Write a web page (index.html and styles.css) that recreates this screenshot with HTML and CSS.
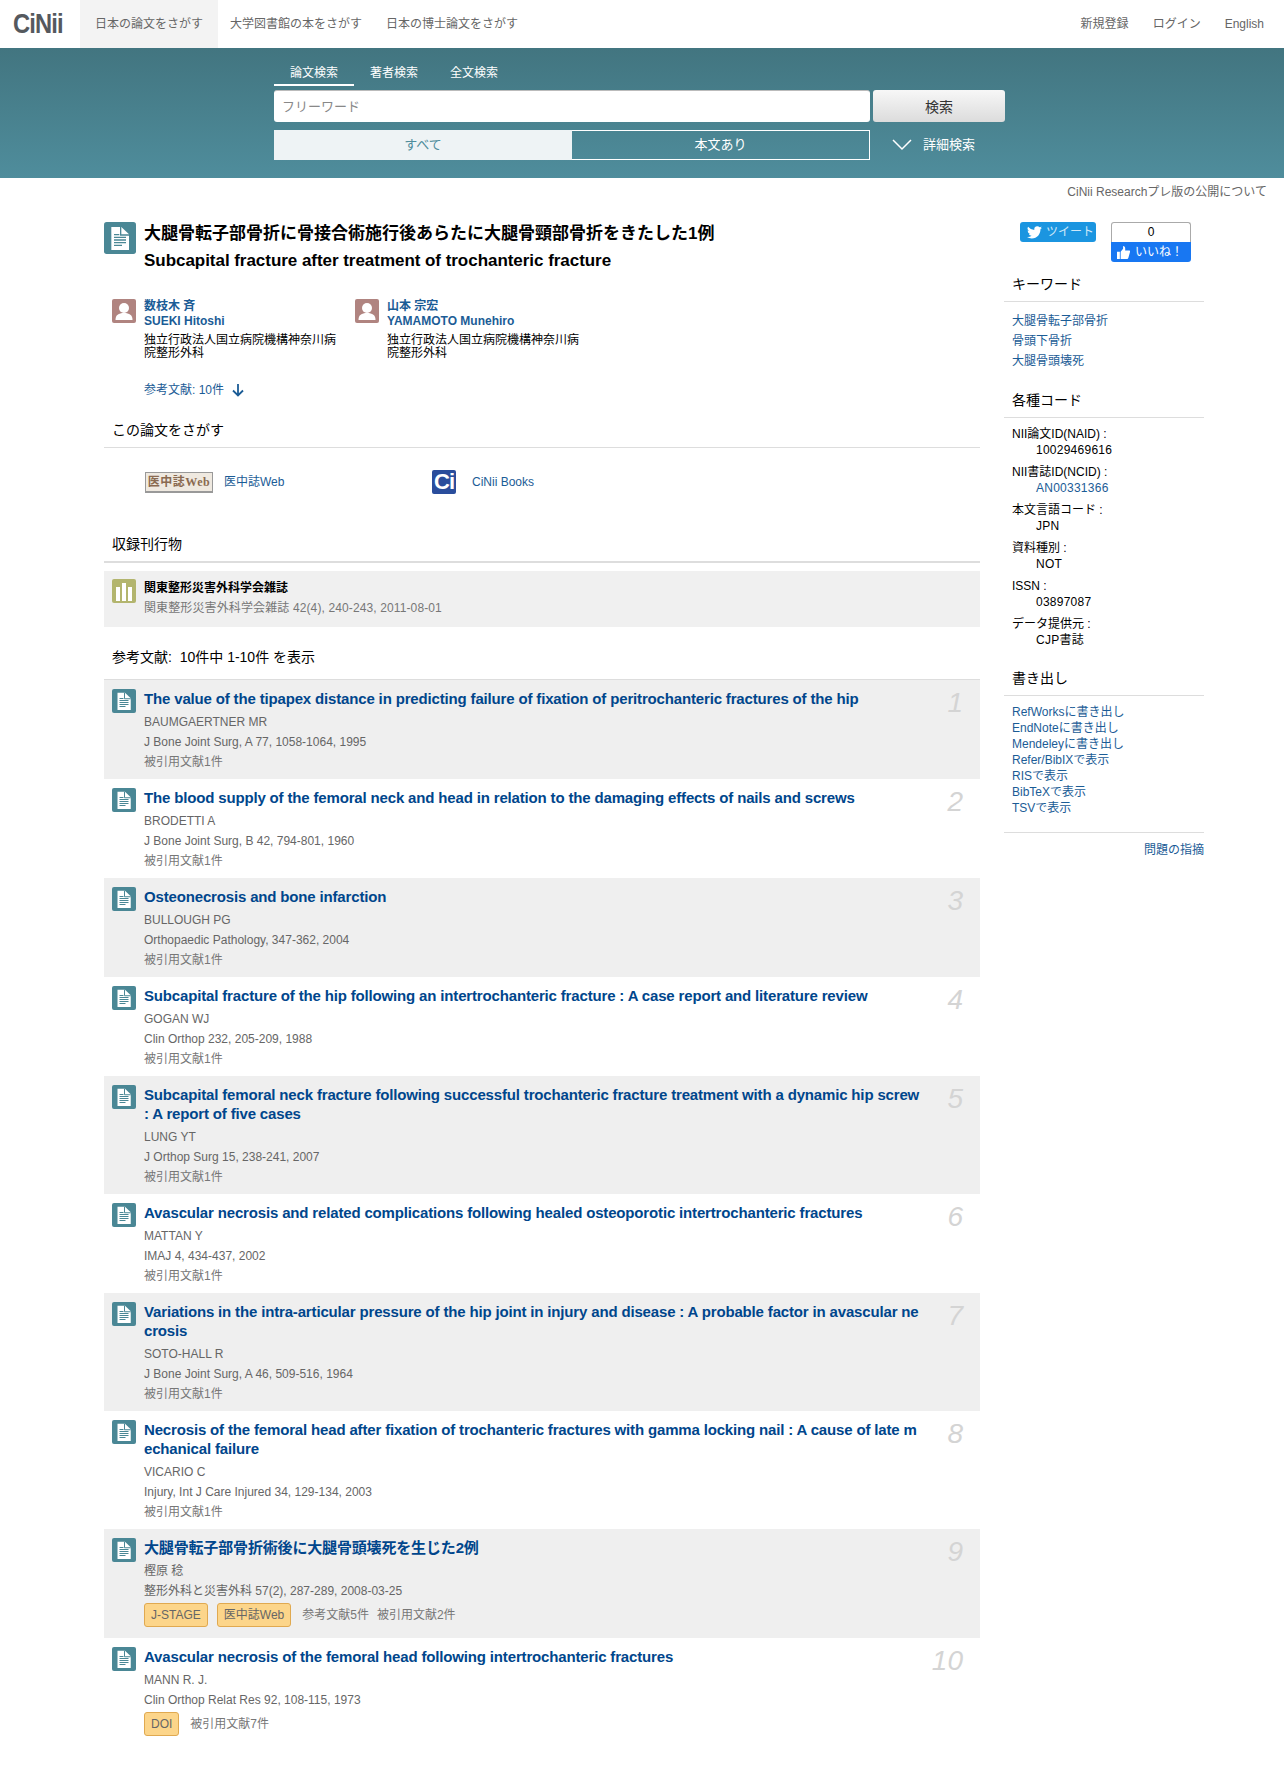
FILE: index.html
```html
<!DOCTYPE html>
<html lang="ja">
<head>
    <meta charset="UTF-8">
    <title>CiNii 論文</title>
    <link rel="stylesheet" href="styles.css">
</head>
<body>
    <svg class="defs" width="0" height="0">
        <symbol id="doc" viewBox="0 0 24 24">
            <rect width="24" height="24" rx="2" fill="#4a8795"/>
            <path d="M5.500 3.750h7.500l5.750 5.500V21H5.500z" fill="#fff"/>
            <path d="M12.500 3.750v6h6.250" fill="none" stroke="#4a8795" stroke-width="1"/>
            <path d="M7.500 9.500h4M7.500 11.500h9M7.500 13.500h9M7.500 15.500h9M7.500 17.500h6" stroke="#4a8795" stroke-width="1" fill="none"/>
        </symbol>
    </svg>

    <header class="topbar">
        <a class="logo"><span class="logo-text">CiNii</span></a>
        <nav class="topnav">
            <a class="active">日本の論文をさがす</a>
            <a>大学図書館の本をさがす</a>
            <a>日本の博士論文をさがす</a>
        </nav>
        <div class="usernav">
            <a>新規登録</a>
            <a>ログイン</a>
            <a>English</a>
        </div>
    </header>

    <section class="search">
        <div class="search-inner">
            <div class="search-tabs">
                <a class="active">論文検索</a>
                <a>著者検索</a>
                <a>全文検索</a>
            </div>
            <div class="search-row">
                <input class="search-input" type="text" placeholder="フリーワード">
                <button class="search-btn">検索</button>
            </div>
            <div class="search-row">
                <div class="range">
                    <span class="range-on">すべて</span>
                    <span class="range-off">本文あり</span>
                </div>
                <a class="detail">
                    <svg width="20" height="12" viewBox="0 0 20 12"><path d="M1 1l9 9 9-9" fill="none" stroke="#fff" stroke-width="1.500"/></svg>
                    詳細検索
                </a>
            </div>
        </div>
    </section>

    <div class="notice"><a>CiNii Researchプレ版の公開について</a></div>

    <div class="wrap">
        <main class="content">
            <div class="paper-head">
                <svg class="icon-lg"><use href="#doc"/></svg>
                <div>
                    <h1>大腿骨転子部骨折に骨接合術施行後あらたに大腿骨頸部骨折をきたした1例</h1>
                    <h2>Subcapital fracture after treatment of trochanteric fracture</h2>
                </div>
            </div>

            <div class="authors">
                <div class="author">
                    <svg class="icon" viewBox="0 0 24 24"><rect width="24" height="24" rx="2" fill="#b08480"/><circle cx="12" cy="9" r="5" fill="#fff"/><path d="M3.500 21c0-5 3-7 8.500-7s8.500 2 8.500 7z" fill="#fff"/></svg>
                    <div class="author-info">
                        <a class="author-name">数枝木 斉<br>SUEKI Hitoshi</a>
                        <p>独立行政法人国立病院機構神奈川病院整形外科</p>
                    </div>
                </div>
                <div class="author">
                    <svg class="icon" viewBox="0 0 24 24"><rect width="24" height="24" rx="2" fill="#b08480"/><circle cx="12" cy="9" r="5" fill="#fff"/><path d="M3.500 21c0-5 3-7 8.500-7s8.500 2 8.500 7z" fill="#fff"/></svg>
                    <div class="author-info">
                        <a class="author-name">山本 宗宏<br>YAMAMOTO Munehiro</a>
                        <p>独立行政法人国立病院機構神奈川病院整形外科</p>
                    </div>
                </div>
            </div>

            <a class="ref-jump">参考文献: 10件
                <svg width="14" height="14" viewBox="0 0 14 14"><path d="M7 1v11M2 7.500l5 5 5-5" fill="none" stroke="#1b5c96" stroke-width="1.800"/></svg>
            </a>

            <h3 class="section-title">この論文をさがす</h3>
            <div class="find">
                <div class="find-item first">
                    <span class="ichushi">医中誌Web</span>
                    <a>医中誌Web</a>
                </div>
                <div class="find-item">
                    <span class="ci-books">Ci</span>
                    <a>CiNii Books</a>
                </div>
            </div>

            <h3 class="section-title thick">収録刊行物</h3>
            <div class="journal">
                <svg class="icon" viewBox="0 0 24 24"><rect width="24" height="24" rx="2" fill="#b3b56e"/><path d="M4 8h4v14H4zM10 4h4v18h-4zM16 8h4v14h-4z" fill="#fff"/></svg>
                <div class="journal-text">
                    <div class="journal-name">関東整形災害外科学会雑誌</div>
                    <div class="journal-sub">関東整形災害外科学会雑誌 42(4), 240-243, 2011-08-01</div>
                </div>
            </div>

            <h3 class="section-title refs-title">参考文献:&nbsp; 10件中 1-10件 を表示</h3>
            <ol class="refs">
                <li class="ref odd">
                    <svg class="icon"><use href="#doc"/></svg>
                    <div class="ref-body">
                        <a class="ref-title">The value of the tipapex distance in predicting failure of fixation of peritrochanteric fractures of the hip</a>
                        <div>BAUMGAERTNER MR</div>
                        <div>J Bone Joint Surg, A 77, 1058-1064, 1995</div>
                        <div class="cited">被引用文献1件</div>
                    </div>
                    <span class="ref-num">1</span>
                </li>
                <li class="ref">
                    <svg class="icon"><use href="#doc"/></svg>
                    <div class="ref-body">
                        <a class="ref-title">The blood supply of the femoral neck and head in relation to the damaging effects of nails and screws</a>
                        <div>BRODETTI A</div>
                        <div>J Bone Joint Surg, B 42, 794-801, 1960</div>
                        <div class="cited">被引用文献1件</div>
                    </div>
                    <span class="ref-num">2</span>
                </li>
                <li class="ref odd">
                    <svg class="icon"><use href="#doc"/></svg>
                    <div class="ref-body">
                        <a class="ref-title">Osteonecrosis and bone infarction</a>
                        <div>BULLOUGH PG</div>
                        <div>Orthopaedic Pathology, 347-362, 2004</div>
                        <div class="cited">被引用文献1件</div>
                    </div>
                    <span class="ref-num">3</span>
                </li>
                <li class="ref">
                    <svg class="icon"><use href="#doc"/></svg>
                    <div class="ref-body">
                        <a class="ref-title">Subcapital fracture of the hip following an intertrochanteric fracture : A case report and literature review</a>
                        <div>GOGAN WJ</div>
                        <div>Clin Orthop 232, 205-209, 1988</div>
                        <div class="cited">被引用文献1件</div>
                    </div>
                    <span class="ref-num">4</span>
                </li>
                <li class="ref odd">
                    <svg class="icon"><use href="#doc"/></svg>
                    <div class="ref-body">
                        <a class="ref-title">Subcapital femoral neck fracture following successful trochanteric fracture treatment with a dynamic hip screw : A report of five cases</a>
                        <div>LUNG YT</div>
                        <div>J Orthop Surg 15, 238-241, 2007</div>
                        <div class="cited">被引用文献1件</div>
                    </div>
                    <span class="ref-num">5</span>
                </li>
                <li class="ref">
                    <svg class="icon"><use href="#doc"/></svg>
                    <div class="ref-body">
                        <a class="ref-title">Avascular necrosis and related complications following healed osteoporotic intertrochanteric fractures</a>
                        <div>MATTAN Y</div>
                        <div>IMAJ 4, 434-437, 2002</div>
                        <div class="cited">被引用文献1件</div>
                    </div>
                    <span class="ref-num">6</span>
                </li>
                <li class="ref odd">
                    <svg class="icon"><use href="#doc"/></svg>
                    <div class="ref-body">
                        <a class="ref-title">Variations in the intra-articular pressure of the hip joint in injury and disease : A probable factor in avascular ne crosis</a>
                        <div>SOTO-HALL R</div>
                        <div>J Bone Joint Surg, A 46, 509-516, 1964</div>
                        <div class="cited">被引用文献1件</div>
                    </div>
                    <span class="ref-num">7</span>
                </li>
                <li class="ref">
                    <svg class="icon"><use href="#doc"/></svg>
                    <div class="ref-body">
                        <a class="ref-title">Necrosis of the femoral head after fixation of trochanteric fractures with gamma locking nail : A cause of late m echanical failure</a>
                        <div>VICARIO C</div>
                        <div>Injury, Int J Care Injured 34, 129-134, 2003</div>
                        <div class="cited">被引用文献1件</div>
                    </div>
                    <span class="ref-num">8</span>
                </li>
                <li class="ref odd">
                    <svg class="icon"><use href="#doc"/></svg>
                    <div class="ref-body">
                        <a class="ref-title">大腿骨転子部骨折術後に大腿骨頭壊死を生じた2例</a>
                        <div>樫原 稔</div>
                        <div>整形外科と災害外科 57(2), 287-289, 2008-03-25</div>
                        <div class="ref-links">
                            <a class="tag">J-STAGE</a><a class="tag">医中誌Web</a>
                            <span class="cited">参考文献5件</span><span class="cited">被引用文献2件</span>
                        </div>
                    </div>
                    <span class="ref-num">9</span>
                </li>
                <li class="ref">
                    <svg class="icon"><use href="#doc"/></svg>
                    <div class="ref-body">
                        <a class="ref-title">Avascular necrosis of the femoral head following intertrochanteric fractures</a>
                        <div>MANN R. J.</div>
                        <div>Clin Orthop Relat Res 92, 108-115, 1973</div>
                        <div class="ref-links">
                            <a class="tag">DOI</a>
                            <span class="cited">被引用文献7件</span>
                        </div>
                    </div>
                    <span class="ref-num">10</span>
                </li>
            </ol>
        </main>

        <aside class="side">
            <div class="social">
                <a class="tweet">
                    <svg width="15" height="13" viewBox="0 0 24 20"><path d="M24 2.400a9.800 9.800 0 0 1-2.800.8A5 5 0 0 0 23.300.4a9.800 9.800 0 0 1-3.100 1.200 4.900 4.900 0 0 0-8.400 4.500A14 14 0 0 1 1.700.9a4.900 4.900 0 0 0 1.500 6.600 4.900 4.900 0 0 1-2.200-.6v.1a4.900 4.900 0 0 0 3.900 4.800 4.900 4.900 0 0 1-2.200.1 4.900 4.900 0 0 0 4.600 3.400A9.900 9.900 0 0 1 0 17.300 14 14 0 0 0 7.500 19.500c9.100 0 14-7.500 14-14v-.6A10 10 0 0 0 24 2.400z" fill="#fff"/></svg>
                    ツイート
                </a>
                <div class="like">
                    <div class="like-count">0</div>
                    <a class="like-btn">
                        <svg width="13" height="13" viewBox="0 0 16 16"><path d="M0 7h3.500v9H0zM4.500 7l3-3.500V0c2 0 3 1.500 2.500 5.500h5c1 0 1.500 1 1 2l-2 7c-.3 1-1 1.500-2 1.500H4.500z" fill="#fff"/></svg>
                        いいね！
                    </a>
                </div>
            </div>

            <h3 class="side-title">キーワード</h3>
            <ul class="keywords">
                <li><a>大腿骨転子部骨折</a></li>
                <li><a>骨頭下骨折</a></li>
                <li><a>大腿骨頭壊死</a></li>
            </ul>

            <h3 class="side-title">各種コード</h3>
            <dl class="codes">
                <dt>NII論文ID(NAID) :</dt>
                <dd>10029469616</dd>
                <dt>NII書誌ID(NCID) :</dt>
                <dd><a>AN00331366</a></dd>
                <dt>本文言語コード :</dt>
                <dd>JPN</dd>
                <dt>資料種別 :</dt>
                <dd>NOT</dd>
                <dt>ISSN :</dt>
                <dd>03897087</dd>
                <dt>データ提供元 :</dt>
                <dd>CJP書誌</dd>
            </dl>

            <h3 class="side-title">書き出し</h3>
            <ul class="exports">
                <li><a>RefWorksに書き出し</a></li>
                <li><a>EndNoteに書き出し</a></li>
                <li><a>Mendeleyに書き出し</a></li>
                <li><a>Refer/BibIXで表示</a></li>
                <li><a>RISで表示</a></li>
                <li><a>BibTeXで表示</a></li>
                <li><a>TSVで表示</a></li>
            </ul>
            <div class="report"><a>問題の指摘</a></div>
        </aside>
    </div>
</body>
</html>
```

FILE: styles.css
```css
* {
    margin: 0;
    padding: 0;
    box-sizing: border-box;
}

body {
    font-family: "Liberation Sans", "Noto Sans CJK JP", sans-serif;
    font-size: 12px;
    line-height: 16px;
    color: #000;
    background: #fff;
}

a {
    color: #1b5c96;
    text-decoration: none;
}

ul, ol {
    list-style: none;
}

.defs {
    display: block;
    height: 0;
}

.icon, .icon-lg {
    flex: none;
    width: 24px;
    height: 24px;
}

.icon-lg {
    width: 32px;
    height: 32px;
}

/* top bar */
.topbar {
    display: flex;
    align-items: stretch;
    height: 48px;
    background: #fff;
}

.logo {
    width: 80px;
    padding-left: 13px;
    line-height: 48px;
}

.logo-text {
    display: inline-block;
    font-size: 27px;
    font-weight: bold;
    letter-spacing: -1px;
    color: #55595e;
    transform: scaleX(.88);
    transform-origin: left;
}

.topnav {
    display: flex;
}

.topnav a, .usernav a {
    line-height: 48px;
    color: #666;
}

.topnav a {
    padding: 0 12px;
    background: #fff;
}

.topnav a.active {
    width: 138px;
    padding: 0 15px;
    background: #f3f3f3;
}

.usernav {
    display: flex;
    gap: 24px;
    margin-left: auto;
    padding-right: 20px;
}

/* search band */
.search {
    height: 130px;
    background: linear-gradient(#427580, #4f8d9c);
}

.search-inner {
    width: 731px;
    margin-left: 274px;
}

.search-tabs {
    display: flex;
    height: 38px;
    padding-top: 17px;
}

.search-tabs a {
    width: 80px;
    height: 21px;
    text-align: center;
    color: #fff;
}

.search-tabs a.active {
    border-bottom: 2px solid #fff;
}

.search-row {
    display: flex;
    gap: 3px;
    margin-top: 4px;
}

.search-row + .search-row {
    margin-top: 8px;
}

.search-input {
    width: 596px;
    height: 32px;
    padding: 0 8px;
    border: 0;
    border-top: 1px solid #bbb;
    border-radius: 3px;
    font: 13px "Liberation Sans", "Noto Sans CJK JP", sans-serif;
}

.search-input::placeholder {
    color: #888;
}

.search-btn {
    width: 132px;
    height: 32px;
    border: 0;
    border-radius: 3px;
    background: linear-gradient(#f7f7f7, #dcdcdc);
    font: 14px "Liberation Sans", "Noto Sans CJK JP", sans-serif;
    color: #333;
}

.range {
    display: flex;
    width: 596px;
    height: 30px;
    font-size: 13px;
    line-height: 28px;
    text-align: center;
}

.range span {
    width: 298px;
}

.range-on {
    background: #eef3f5;
    color: #4f8d9c;
    border: 1px solid #eef3f5;
}

.range-off {
    color: #fff;
    border: 1px solid #fff;
    border-left: 0;
}

.detail {
    display: flex;
    align-items: center;
    gap: 11px;
    margin-left: 19px;
    font-size: 13px;
    color: #fff;
}

.notice {
    padding: 6px 17px 0 0;
    text-align: right;
}

.notice a {
    color: #666;
}

/* layout */
.wrap {
    display: flex;
    gap: 24px;
    margin-left: 104px;
}

.content {
    width: 876px;
}

.side {
    width: 200px;
}

/* paper header */
.paper-head {
    display: flex;
    gap: 8px;
    padding-top: 22px;
}

h1 {
    font-size: 17px;
    line-height: 24px;
    font-weight: bold;
}

h2 {
    font-size: 17px;
    letter-spacing: -.04px;
    line-height: 24px;
    margin-top: 3px;
    font-weight: bold;
}

.authors {
    display: flex;
    margin-top: 26px;
    padding-left: 8px;
}

.author {
    display: flex;
    gap: 8px;
    width: 243px;
}

.author-info {
    width: 200px;
}

.author-name {
    display: block;
    font-weight: bold;
    line-height: 15px;
}

.author-info p {
    margin-top: 5px;
    line-height: 13px;
}

.ref-jump {
    display: flex;
    align-items: center;
    gap: 7px;
    margin: 22px 0 0 40px;
}

.section-title {
    font-size: 14px;
    font-weight: normal;
    line-height: 20px;
    padding: 0 8px 7px;
    border-bottom: 1px solid #ddd;
    margin-top: 22px;
}

.section-title.thick {
    border-bottom: 2px solid #ddd;
    margin-top: 40px;
}

.find {
    display: flex;
    align-items: center;
    padding: 22px 0 0 41px;
}

.find-item {
    display: flex;
    align-items: center;
    height: 24px;
}

.find-item.first {
    width: 287px;
    gap: 11px;
}

.ichushi {
    width: 68px;
    height: 21px;
    border: 1px solid #999;
    border-bottom-width: 2px;
    background: #efe9e0;
    color: #8a6a50;
    font: bold 12px/18px "Liberation Serif", "Noto Sans CJK JP", serif;
    letter-spacing: .5px;
    text-align: center;
}

.ci-books {
    width: 24px;
    height: 24px;
    margin-right: 16px;
    border-radius: 2px;
    background: #2a4d9c;
    color: #fff;
    font: bold 22px/24px "Liberation Sans", sans-serif;
    letter-spacing: -1px;
    text-align: center;
}

.journal {
    display: flex;
    gap: 8px;
    height: 56px;
    margin-top: 8px;
    padding: 8px;
    background: #f0f0f0;
}

.journal-text {
    padding-top: 1px;
}

.journal-name {
    font-weight: bold;
}

.journal-sub {
    margin-top: 4px;
    letter-spacing: .12px;
    color: #777;
}

.refs-title {
    margin-top: 20px;
    padding-bottom: 12px;
}

/* reference rows */
.ref {
    display: flex;
    gap: 8px;
    position: relative;
    padding: 9px 56px 7px 8px;
}

.ref.odd {
    background: #efefef;
}

.ref-body {
    flex: 1;
    line-height: 20px;
    color: #666;
}

.ref-title {
    display: block;
    font-size: 15px;
    letter-spacing: -.16px;
    font-weight: bold;
    line-height: 19px;
    margin-bottom: 4px;
    color: #00468c;
}

.ref-num {
    position: absolute;
    top: 7px;
    right: 17px;
    font-size: 28px;
    line-height: 32px;
    font-style: italic;
    color: #d4d4d4;
}

.ref-links {
    display: flex;
    align-items: center;
    gap: 9px;
    margin-top: 2px;
    padding-bottom: 4px;
}

.tag {
    padding: 0 6px;
    height: 24px;
    line-height: 22px;
    border: 1px solid #e0a950;
    border-radius: 3px;
    background: #fcd58a;
    color: #666;
}

.cited {
    color: #777;
}

.tag + .cited {
    margin-left: 2px;
}

.ref-links .cited + .cited {
    margin-left: -1px;
}

/* sidebar */
.social {
    display: flex;
    gap: 15px;
    padding: 22px 0 0 16px;
}

.tweet {
    display: flex;
    align-items: center;
    gap: 4px;
    width: 76px;
    height: 20px;
    padding-left: 7px;
    border-radius: 3px;
    background: #1b95e0;
    color: #cfe8f8;
    font-size: 12px;
}

.like {
    width: 80px;
    height: 40px;
}

.like-count {
    height: 20px;
    border: 1px solid #aaa;
    border-bottom: 0;
    border-radius: 3px 3px 0 0;
    text-align: center;
    font-size: 12px;
    line-height: 19px;
}

.like-btn {
    display: flex;
    align-items: center;
    gap: 5px;
    height: 20px;
    padding-left: 6px;
    border-radius: 0 0 3px 3px;
    background: #1877f2;
    color: #fff;
    font-size: 12px;
}

.side-title {
    font-size: 14px;
    font-weight: normal;
    line-height: 20px;
    padding: 0 8px 7px;
    border-bottom: 1px solid #ddd;
    margin-top: 12px;
}

.keywords {
    padding: 9px 8px 0;
    line-height: 20px;
}

.keywords + .side-title {
    margin-top: 19px;
}

.codes + .side-title {
    margin-top: 20px;
}

.codes {
    padding: 8px 8px 0;
}

.codes dd {
    padding-left: 24px;
    margin-bottom: 6px;
    letter-spacing: .25px;
}

.exports {
    padding: 8px 8px 0;
}

.report {
    margin-top: 16px;
    padding-top: 9px;
    border-top: 1px solid #ddd;
    text-align: right;
}
```
